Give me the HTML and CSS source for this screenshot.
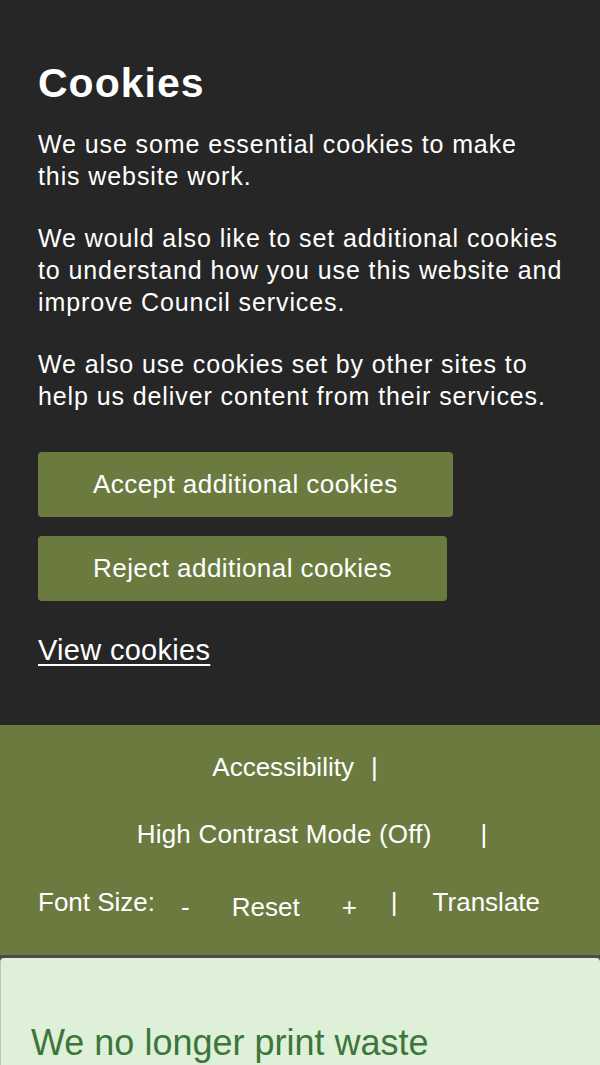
FILE: index.html
```html
<!DOCTYPE html>
<html lang="en">
<head>
<meta charset="utf-8">
<title>Cookies</title>
<link rel="stylesheet" href="styles.css">
</head>
<body>
<div class="cookie-banner">
  <h2 class="cookie-title">Cookies</h2>
  <p class="cookie-text">We use some essential cookies to make this website work.</p>
  <p class="cookie-text">We would also like to set additional cookies to understand how you use this website and improve Council services.</p>
  <p class="cookie-text">We also use cookies set by other sites to help us deliver content from their services.</p>
  <div class="cookie-actions">
    <button class="cookie-btn">Accept additional cookies</button>
    <button class="cookie-btn">Reject additional cookies</button>
  </div>
  <p class="cookie-more"><a class="cookie-link" href="#">View cookies</a></p>
</div>
<div class="access-bar">
  <div class="access-row row-a"><span>Accessibility</span><span class="sep">|</span></div>
  <div class="access-row row-b"><span class="hc">High Contrast Mode (Off)</span><span class="sep wide">|</span></div>
  <div class="access-row font-row">
    <span class="fs-label">Font Size:</span>
    <span class="fs-btn fs-minus">-</span>
    <span class="fs-btn fs-reset">Reset</span>
    <span class="fs-btn fs-plus">+</span>
    <span class="sep fs-sep">|</span>
    <span>Translate</span>
  </div>
</div>
<div class="notice">
  <p class="notice-text">We no longer print waste</p>
</div>
</body>
</html>
```

FILE: styles.css
```css
html, body {
  margin: 0;
  padding: 0;
}
html {
  overflow: hidden;
}
body {
  font-family: "Liberation Sans", Arial, sans-serif;
  background: #4b4d4a;
  width: 600px;
  height: 1065px;
  overflow: hidden;
}
.cookie-banner {
  background: #262626;
  color: #ffffff;
  padding: 60px 35px 59px 38px;
}
.cookie-title {
  margin: 0 0 22px 0;
  font-size: 41px;
  line-height: 46px;
  letter-spacing: 1px;
  font-weight: bold;
}
.cookie-text {
  margin: 0 0 30px 0;
  font-size: 25px;
  line-height: 32px;
  letter-spacing: 0.9px;
}
.cookie-actions {
  display: flex;
  flex-direction: column;
  align-items: flex-start;
  gap: 19px;
  margin-top: 40px;
}
.cookie-btn {
  font-family: "Liberation Sans", Arial, sans-serif;
  font-size: 26px;
  letter-spacing: 0.45px;
  color: #ffffff;
  background: #6b7b40;
  border: none;
  border-radius: 4px;
  height: 65px;
  padding: 0 55px;
}
.cookie-more {
  margin: 33px 0 0 0;
  font-size: 29px;
  line-height: 32px;
}
.cookie-link {
  color: #ffffff;
  letter-spacing: 0.3px;
  text-decoration: underline;
  text-decoration-thickness: 2px;
  text-underline-offset: 4px;
}
.access-bar {
  background: #6b7b40;
  color: #ffffff;
  font-size: 26px;
  padding: 26px 0 37px 0;
  display: flex;
  flex-direction: column;
  gap: 35px;
}
.access-row {
  display: flex;
  justify-content: center;
  align-items: baseline;
  gap: 17px;
  line-height: 32px;
}
.row-a {
  padding-right: 10px;
}
.row-b {
  padding-left: 24px;
}
.hc {
  letter-spacing: 0.2px;
}
.sep.wide {
  margin-left: 32px;
}
.font-row {
  justify-content: flex-start;
  padding-left: 38px;
  margin-top: 1px;
  gap: 0;
}
.fs-btn {
  position: relative;
  top: 5px;
}
.fs-label { margin-right: 26px; }
.fs-minus { margin-right: 42px; }
.fs-reset { margin-right: 42px; }
.fs-plus { margin-right: 34px; }
.fs-sep { margin-right: 35px; }
.notice {
  margin-top: 3px;
  background: #dff0d8;
  border-left: 1px solid #b9c9b2;
  border-radius: 4px 4px 0 0;
  height: 107px;
  padding: 65px 0 0 30px;
  box-sizing: border-box;
}
.notice-text {
  margin: 0;
  color: #3c763d;
  font-size: 36px;
  line-height: 40px;
}
```
